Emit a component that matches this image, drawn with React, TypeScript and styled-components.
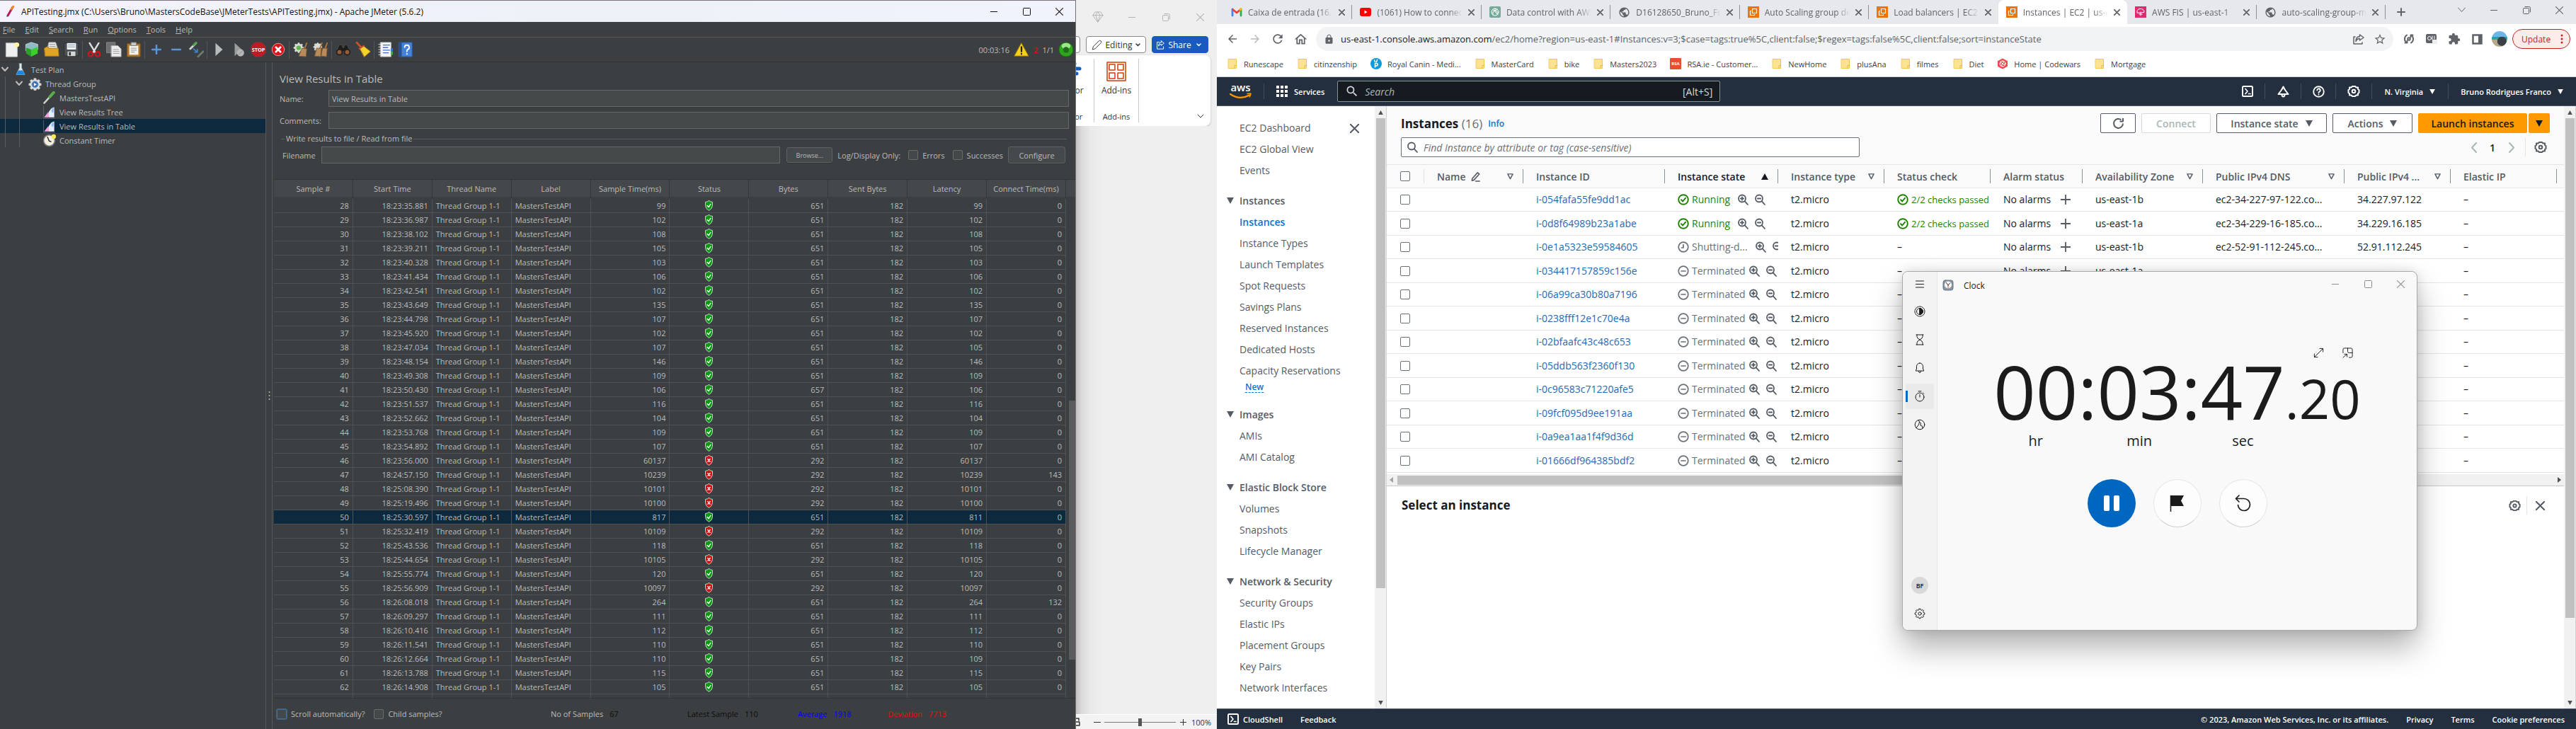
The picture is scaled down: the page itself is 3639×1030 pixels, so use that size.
import React from "react";
import styled, { createGlobalStyle, css } from "styled-components";
import {
  MdArrowBack, MdArrowForward, MdRefresh, MdOutlineHome, MdLock, MdStarBorder,
  MdExtension, MdSearch, MdPublic,
} from "react-icons/md";

const ui = `"Open Sans", "Noto Sans", "Liberation Sans", sans-serif`;

const Global = createGlobalStyle`
  *, *::before, *::after { box-sizing: border-box; }
  html, body { margin: 0; height: 100%; }
  body { font-family: ${ui}; overflow: hidden; background: #efefef; }
  #root { height: 100%; }
  button, input { font: inherit; color: inherit; margin: 0; }
  button { cursor: pointer; }
  a { color: inherit; text-decoration: none; }
`;

const Desktop = styled.div`
  display: grid;
  grid-template-columns: minmax(0, 1520fr) minmax(0, 199fr) minmax(0, 1920fr);
  height: 100vh;
  min-height: 600px;
  white-space: nowrap;
`;

const Svg = styled.svg<{ $w: number; $h?: number }>`
  display: block;
  flex: none;
  width: ${(p) => p.$w}px;
  height: ${(p) => p.$h ?? p.$w}px;
  fill: none;
  stroke: currentColor;
  stroke-linecap: round;
  stroke-linejoin: round;
`;
type GlyphProps = { w?: number; h?: number; box?: string; line?: number; children: React.ReactNode };
const Glyph = ({ w = 16, h, box = "0 0 16 16", line = 1, children }: GlyphProps) => (
  <Svg $w={w} $h={h} viewBox={box} strokeWidth={line} aria-hidden="true">{children}</Svg>
);

const Bare = styled.button<{ $w?: number; $h?: number }>`
  display: flex;
  align-items: center;
  justify-content: center;
  flex: none;
  padding: 0;
  border: 0;
  background: none;
  width: ${(p) => (p.$w ? `${p.$w}px` : "auto")};
  height: ${(p) => (p.$h ? `${p.$h}px` : "auto")};
`;
const Spacer = styled.div`flex: 1;`;

const MinGlyph = () => <Glyph w={10} box="0 0 10 10"><path d="M0 5.500h10" /></Glyph>;
const MaxGlyph = () => <Glyph w={11} box="0 0 11 11"><rect x=".5" y=".5" width="10" height="10" rx="1" /></Glyph>;
const RestoreGlyph = () => <Glyph w={11} box="0 0 11 11"><rect x=".5" y="2.500" width="8" height="8" rx="1" /><path d="M3 .5h5.500a2 2 0 0 1 2 2V8" /></Glyph>;
const CloseGlyph = ({ w = 11, line = 1 }: { w?: number; line?: number }) => <Glyph w={w} box="0 0 10 10" line={line}><path d="M.5.5l9 9M9.500.5l-9 9" /></Glyph>;

/* ---------- JMeter ---------- */

const JMeterWindow = styled.section`
  display: flex;
  flex-direction: column;
  min-height: 0;
  overflow: hidden;
  background: #3c3f41;
  color: #bbbbbb;
  font-size: 11px;
  border-right: 1px solid #77706f;
`;
const JTitleBar = styled.header`
  display: flex;
  align-items: center;
  height: 31px;
  padding-left: 9px;
  gap: 9px;
  border-top: 1px solid #7b7478;
  background: linear-gradient(90deg, #f4f2fb, #ecf1f8 55%, #f0f3fb);
  color: #111;
  font-size: 12px;
`;
const JWindowButtons = styled.div`display: flex;`;
const JMenuBar = styled.nav`
  display: flex;
  align-items: center;
  height: 22px;
  padding-left: 4px;
  gap: 14px;
  border-bottom: 1px solid #5a5856;
`;
const JToolBar = styled.div`
  display: flex;
  align-items: center;
  height: 35px;
  padding-left: 3px;
  border-bottom: 1px solid #323232;
`;
const ToolSep = styled.i`
  width: 1px;
  height: 25px;
  margin: 0 2px 0 1px;
  background: #535658;
`;
const RunInfo = styled.div`
  display: flex;
  align-items: center;
  gap: 6px;
  padding-right: 2px;
`;
const Alert = styled.span`color: #ff0000;`;
const JBody = styled.div`
  flex: 1;
  min-height: 0;
  display: grid;
  grid-template-columns: 375px 10px minmax(0, 1fr);
`;
const Tree = styled.ul`
  list-style: none;
  margin: 0;
  padding: 0;
`;
const TreeRow = styled.li<{ $depth: number; $on?: boolean }>`
  display: flex;
  align-items: center;
  height: 20px;
  gap: 5px;
  padding-left: ${(p) => p.$depth * 20}px;
  background:
    ${(p) => (p.$depth > 0 ? "linear-gradient(#5a5d5f, #5a5d5f) 7px 0 / 1px 100% no-repeat," : "")}
    ${(p) => (p.$depth > 1 ? "linear-gradient(#5a5d5f, #5a5d5f) 27px 0 / 1px 100% no-repeat," : "")}
    ${(p) => (p.$on ? "#0d293e" : "transparent")};
`;
const Twist = styled.span`
  display: flex;
  justify-content: center;
  width: 14px;
`;
const TreeIcon = styled.span`
  display: flex;
  justify-content: center;
  width: 20px;
`;
const Splitter = styled.div`
  display: flex;
  align-items: center;
  justify-content: center;
  border-left: 1px solid #555859;
  border-right: 1px solid #555859;
`;
const JPane = styled.main`
  display: flex;
  flex-direction: column;
  min-width: 0;
  min-height: 0;
`;
const JForm = styled.form`
  display: grid;
  row-gap: 7px;
  padding: 13px 9px 0 10px;
`;
const JHeading = styled.h1`
  margin: 0 0 -1px;
  font-size: 15px;
  font-weight: 400;
  line-height: 20px;
`;
const Field = styled.div<{ $label: number }>`
  display: grid;
  grid-template-columns: ${(p) => p.$label}px minmax(0, 1fr);
  align-items: center;
`;
const JInput = styled.input`
  min-width: 0;
  width: 100%;
  height: 24px;
  padding: 0 4px;
  border: 1px solid #646668;
  background: #45494a;
  outline: 0;
`;
const FileSet = styled.fieldset`
  min-width: 0;
  margin: -3px 3px 0 2px;
  padding: 1px 2px 0;
  border: 0;
  border-top: 1px solid #5b5d5e;
`;
const Legend = styled.legend`
  margin-left: 3px;
  padding: 0 2px;
  line-height: 20px;
`;
const FileRow = styled.div`
  display: flex;
  align-items: center;
  ${Field} { flex: 1; margin-right: 9px; }
`;
const JButton = styled.button<{ $w: number; $small?: boolean }>`
  width: ${(p) => p.$w}px;
  height: ${(p) => (p.$small ? 22 : 24)}px;
  padding: 0;
  font-size: ${(p) => (p.$small ? 9 : 11)}px;
  border: 1px solid #5e6162;
  border-radius: 3px;
  background: #44494b;
  box-shadow: 0 1px 0 #333637;
`;
const JCheck = styled.label`
  display: flex;
  align-items: center;
  gap: 6px;
  margin-left: 11px;
  input {
    appearance: none;
    width: 14px;
    height: 14px;
    border: 1px solid #6b6b6b;
    border-radius: 2px;
    background: #43494a;
  }
  input[data-focus="true"] {
    border: 1px solid #466d94;
    box-shadow: 0 0 0 1px #3d6185;
  }
`;
const LogLabel = styled.span`margin-left: 7px;`;
const ResultArea = styled.div`
  flex: 1;
  min-height: 0;
  display: grid;
  grid-template-columns: minmax(0, 1fr) 13px;
  margin: 22px 0 0 2px;
  overflow: hidden;
  border-top: 1px solid #313335;
  border-bottom: 1px solid #313335;
`;
const Clip = styled.div`
  min-height: 0;
  overflow: hidden;
`;
const ResultTable = styled.table`
  width: 100%;
  table-layout: fixed;
  border-collapse: separate;
  border-spacing: 0;
  th {
    height: 27px;
    padding: 0;
    font-weight: 400;
    text-align: center;
    background: #45484a;
    background-clip: padding-box;
    border-right: 1px solid #35383a;
    border-bottom: 3px solid #3c3f41;
  }
  td {
    height: 20px;
    padding: 0 5px;
    line-height: 16px;
    text-align: right;
    border-right: 1px solid #505355;
    border-bottom: 1px solid #505355;
  }
`;
const ResultRow = styled.tr<{ $on?: boolean }>`background: ${(p) => (p.$on ? "#0d293e" : "transparent")};`;
const LeftCell = styled.td`&&& { text-align: left; }`;
const IconCell = styled.td`svg { margin: 0 auto; }`;
const JScroll = styled.div`
  display: flex;
  flex-direction: column;
  align-items: center;
  &::before { content: ""; width: 100%; height: 24px; background: #45484a; }
`;
const JThumb = styled.div`
  width: 9px;
  flex: 0 0 50%;
  margin: 288px 0 0 3px;
  background: #595b5d;
`;
const JFooter = styled.footer`
  display: flex;
  align-items: center;
  height: 43px;
  padding-left: 6px;
  ${JCheck} { margin-left: 0; margin-right: 13px; }
`;
const CheckGroup = styled.div`
  display: flex;
  flex: 0 0 387px;
`;
const Stats = styled.dl`
  display: grid;
  grid-template-columns: 193px 156px 127px auto;
  margin: 0;
`;
const Stat = styled.div<{ $tone: string; $value?: string }>`
  display: flex;
  gap: 9px;
  color: ${(p) => p.$tone};
  dd { margin: 0; color: ${(p) => p.$value ?? p.$tone}; }
`;

const Shield = ({ ok }: { ok: boolean }) => (
  <Glyph w={13} h={15} box="0 0 13 16">
    <path d="M6.500.6Q9 2.600 11.800 2.600V8q0 4.500-5.300 7.400Q1.200 12.500 1.200 8V2.600Q4 2.600 6.500.6z" fill={ok ? "#0a9a16" : "#d40d14"} stroke="#d4d8d4" />
    {ok
      ? <path d="M4 8l2 2.200 3.200-4.400" stroke="#fff" strokeWidth="1.400" />
      : <path d="M4.800 6l3.400 4M8.200 6l-3.400 4" stroke="#fff" strokeWidth="1.500" />}
  </Glyph>
);

const gear = "M10.300 2h3.400l.6 2.600 2 .8 2.300-1.400 2.400 2.400-1.400 2.300.8 2 2.600.6v3.400l-2.600.6-.8 2 1.400 2.300-2.400 2.400-2.300-1.400-2 .8-.6 2.600h-3.400l-.6-2.600-2-.8-2.300 1.400L3 19.600l1.400-2.300-.8-2-2.600-.6v-3.400l2.600-.6.8-2L3 6.400 5.400 4l2.300 1.400 2-.8z";

const Art = ({ w = 22, children }: { w?: number; children: React.ReactNode }) => <Glyph w={w} box="0 0 24 24">{children}</Glyph>;
const tools: Record<string, React.ReactNode> = {
  New: <Art><path d="M3 2h17v21H3z" fill="#efefef" stroke="#cfcfcf" /><circle cx="19.500" cy="4.500" r="3.500" fill="#fff7a0" stroke="none" /></Art>,
  Templates: <Art><path d="M3 4l8-3 10 3v8l-8 5-10-3z" fill="#8fb9c4" stroke="#c9dbe0" /><path d="M3 9l8 3v11l-8-5z" fill="#2aa12a" stroke="none" /><path d="M11 12l10-4v10l-10 5z" fill="#3ccf2c" stroke="none" /></Art>,
  Open: <Art><path d="M8 1h10l3 9H6z" fill="#eee" stroke="#bbb" /><path d="M9 4h8M9 7h9" stroke="#888" /><path d="M1 10l3-2h3v2h15l1 12H2z" fill="#e0a527" stroke="#b98212" /></Art>,
  Save: <Art><path d="M1 2h22v20H1z" fill="#4d5154" stroke="#2b2d2e" /><path d="M5 2h14v10H5z" fill="#eef2f5" stroke="none" /><path d="M7 5h10M7 8h10" stroke="#7f9bb5" /><path d="M6 15h12v7H6z" fill="#d5d8da" stroke="none" /><path d="M8 16h3v5H8z" fill="#333" stroke="none" /></Art>,
  Cut: <Art><path d="M5 2l9 15M19 2l-9 15" stroke="#e2e2e2" strokeWidth="2.500" /><circle cx="6.500" cy="19" r="3.500" stroke="#d3151b" strokeWidth="2.500" /><circle cx="17.500" cy="19" r="3.500" stroke="#d3151b" strokeWidth="2.500" /></Art>,
  Copy: <Art><path d="M1 1h13v16H1z" fill="#6e7070" stroke="#8b8d8d" /><path d="M8 6h10l5 5v12H8z" fill="#ececec" stroke="#aaa" /><path d="M11 12h8M11 15h9M11 18h9" stroke="#999" /></Art>,
  Paste: <Art><path d="M2 3h20v20H2z" fill="#b2782b" stroke="#7d5118" /><path d="M5 6h14v14H5z" fill="#f3f3ee" stroke="none" /><path d="M8 1h8v5H8z" fill="#c9c9c9" stroke="#777" /><path d="M8 10h8M8 13h8M8 16h5" stroke="#8a8a8a" /></Art>,
  Expand: <Glyph w={14} box="0 0 14 14" line={2.500}><path d="M7 1v12M1 7h12" stroke="#5c94d6" /></Glyph>,
  Collapse: <Glyph w={14} box="0 0 14 14" line={2.500}><path d="M1 7h12" stroke="#5c94d6" /></Glyph>,
  Toggle: <Art><path d="M3 11L12 2" stroke="#cdd6cd" strokeWidth="3" /><path d="M8 5l4-4" stroke="#4a9f42" strokeWidth="3" /><path d="M8 11l6 5M14 12v4h-4" stroke="#3d83cf" strokeWidth="2" /><path d="M15 23l8-8" stroke="#6c7a6c" strokeWidth="3" /></Art>,
  Start: <Art><path d="M7 2l11 10L7 22z" fill="#b9bcbd" stroke="none" /></Art>,
  "Start no pauses": <Art><path d="M6 2l11 10L6 22z" fill="#9b9e9f" stroke="none" /><circle cx="15" cy="17" r="5.500" fill="#b6b8b8" stroke="none" /><path d="M12 20l6-6" stroke="#888" /></Art>,
  Stop: <Art><path d="M7 1h10l6 6v10l-6 6H7l-6-6V7z" fill="#c01b25" stroke="#7c3b3f" /><text x="12" y="15.500" textAnchor="middle" fontSize="8" fontWeight="700" fill="#fff" stroke="none">STOP</text></Art>,
  Shutdown: <Art><circle cx="12" cy="12" r="9.500" fill="#d9121a" stroke="#f0a0a0" /><path d="M8.500 8.500l7 7M15.500 8.500l-7 7" stroke="#fff" strokeWidth="3" /></Art>,
  Clear: <Art><path d={gear} fill="#d9d9d6" stroke="none" transform="scale(.72)" /><circle cx="8.600" cy="9.400" r="3.500" fill="#5cb548" stroke="none" /><path d="M21 2l-3 8" stroke="#a9793f" strokeWidth="2" /><path d="M14 10l7 1-1 12-11-1z" fill="#b98a5a" stroke="#7e5b35" /></Art>,
  "Clear all": <Art><path d={gear} fill="#d9d9d6" stroke="none" transform="scale(.62)" /><path d="M14 2l-3 8M22 2l-3 8" stroke="#a9793f" strokeWidth="2" /><path d="M6 10h7l-1 13-9-1z" fill="#b98a5a" stroke="#7e5b35" /><path d="M15 10h7l-1 13-8-1z" fill="#b98a5a" stroke="#7e5b35" /></Art>,
  Find: <Art><path d="M6 5h4l1 4h2l1-4h4l4 10H2z" fill="#1c1c1c" stroke="#4a4a4a" /><circle cx="6" cy="16" r="4.200" fill="#9a5a35" stroke="#222" strokeWidth="2" /><circle cx="18" cy="16" r="4.200" fill="#9a5a35" stroke="#222" strokeWidth="2" /></Art>,
  "Reset search": <Art><path d="M2 1l8 9" stroke="#c4552a" strokeWidth="3" /><path d="M7 10l6-3 10 8-9 8z" fill="#f5d12e" stroke="#c99c10" /><path d="M6 11l7-5" stroke="#d24830" strokeWidth="2" /></Art>,
  Functions: <Art><path d="M4 1h16v22H4z" fill="#f6f7fb" stroke="#bbb" /><path d="M8 5h10M8 9h7M8 13h10M8 17h8" stroke="#3f6fd0" strokeWidth="1.500" /><path d="M1 4h4M1 8h4M1 12h4M1 16h4M1 20h4" stroke="#ddd" /><path d="M20 10h3v5h-3z" fill="#2c6fe0" stroke="none" /><path d="M20 15h3v5h-3z" fill="#35b53c" stroke="none" /></Art>,
  Help: <Art><path d="M2 1h20v22H2z" fill="#4583d8" stroke="#2b5ca6" /><path d="M2 1h4v22H2z" fill="#284f8f" stroke="none" /><path d="M10.500 8.500a3.500 3.500 0 1 1 4.500 3.500q-1 .5-1 3M14 18.500v.5" stroke="#fff" strokeWidth="2" /></Art>,
};
const toolGroups = [
  ["New", "Templates", "Open", "Save"], ["Cut", "Copy", "Paste"], ["Expand", "Collapse", "Toggle"],
  ["Start", "Start no pauses", "Stop", "Shutdown"], ["Clear", "Clear all"], ["Find", "Reset search"], ["Functions", "Help"],
];
const Down = () => <Glyph w={10} h={8} box="0 0 10 8" line={2}><path d="M1 1.500l4 4.500 4-4.500" /></Glyph>;
const Chart = () => <Art w={19}><path d="M2 1v22h20" stroke="#6c6a78" /><path d="M3 21l7-9 3 4v5z" fill="#f3a6dd" stroke="none" /><path d="M11 12Q16 3 21 3v18h-9z" fill="#e4eeff" stroke="none" /><path d="M16 9q3-7 4-4 0 9-3 8z" fill="#8fb8ee" stroke="none" /></Art>;
const treeRows = [
  { depth: 0, text: "Test Plan", open: true, icon: <Art w={18}><path d="M10 1h4v8l6 13H4l6-13z" fill="#d8e6ee" stroke="#9fb4c0" /><path d="M8 14h8l4 8H4z" fill="#1f86dd" stroke="none" /></Art> },
  { depth: 1, text: "Thread Group", open: true, icon: <Art w={19}><path d={gear} fill="#dfe2e4" stroke="#aaa" /><circle cx="12" cy="13" r="6" fill="#3b6fae" stroke="#9db7d5" /><path d="M10 10l5 3-5 3z" fill="#fff" stroke="none" /></Art> },
  { depth: 2, text: "MastersTestAPI", icon: <Art w={19}><path d="M3 21L14 9" stroke="#cdd3cd" strokeWidth="3" /><path d="M13 10l7-8" stroke="#5bab4d" strokeWidth="5" /></Art> },
  { depth: 2, text: "View Results Tree", icon: <Chart /> },
  { depth: 2, text: "View Results in Table", on: true, icon: <Chart /> },
  { depth: 2, text: "Constant Timer", icon: <Art w={19}><circle cx="12" cy="12" r="10" fill="#f2efdf" stroke="#76777a" strokeWidth="2" /><path d="M12 13l-3-7M12 13l3 1" stroke="#333" strokeWidth="2" /><circle cx="20" cy="5" r="4" fill="#ffe94d" stroke="none" /></Art> },
];

const headers = ["Sample #", "Start Time", "Thread Name", "Label", "Sample Time(ms)", "Status", "Bytes", "Sent Bytes", "Latency", "Connect Time(ms)"];
type Sample = [number, string, number, number?, number?, number?];
const samples: Sample[] = [
  [28, "18:23:35.881", 99], [29, "18:23:36.987", 102], [30, "18:23:38.102", 108], [31, "18:23:39.211", 105],
  [32, "18:23:40.328", 103], [33, "18:23:41.434", 106], [34, "18:23:42.541", 102], [35, "18:23:43.649", 135],
  [36, "18:23:44.798", 107], [37, "18:23:45.920", 102], [38, "18:23:47.034", 107, 651, 105], [39, "18:23:48.154", 146],
  [40, "18:23:49.308", 109], [41, "18:23:50.430", 106, 657], [42, "18:23:51.537", 116], [43, "18:23:52.662", 104],
  [44, "18:23:53.768", 109], [45, "18:23:54.892", 107], [46, "18:23:56.000", 60137, 292], [47, "18:24:57.150", 10239, 292, 10239, 143],
  [48, "18:25:08.390", 10101, 292], [49, "18:25:19.496", 10100, 292], [50, "18:25:30.597", 817, 651, 811], [51, "18:25:32.419", 10109, 292],
  [52, "18:25:43.536", 118], [53, "18:25:44.654", 10105, 292], [54, "18:25:55.774", 120], [55, "18:25:56.909", 10097, 292],
  [56, "18:26:08.018", 264, 651, 264, 132], [57, "18:26:09.297", 111], [58, "18:26:10.416", 112], [59, "18:26:11.541", 110],
  [60, "18:26:12.664", 110, 651, 109], [61, "18:26:13.788", 115], [62, "18:26:14.908", 105],
];

const JMeter = () => (
  <JMeterWindow>
    <JTitleBar>
      <Glyph w={12} h={16} box="0 0 12 16"><path d="M2 14L9 2" stroke="#c2185b" strokeWidth="3" /><path d="M7 5l3-4" stroke="#f08a24" strokeWidth="2.500" /><path d="M1 15.500l2-3" stroke="#5a2d82" /></Glyph>
      <span>APITesting.jmx (C:\Users\Bruno\MastersCodeBase\JMeterTests\APITesting.jmx) - Apache JMeter (5.6.2)</span>
      <Spacer />
      <JWindowButtons>
        <Bare $w={46} $h={30} aria-label="Minimize"><MinGlyph /></Bare>
        <Bare $w={46} $h={30} aria-label="Maximize"><MaxGlyph /></Bare>
        <Bare $w={46} $h={30} aria-label="Close"><CloseGlyph /></Bare>
      </JWindowButtons>
    </JTitleBar>
    <JMenuBar>
      {["File", "Edit", "Search", "Run", "Options", "Tools", "Help"].map((m) => <Bare key={m}><span><u>{m[0]}</u>{m.slice(1)}</span></Bare>)}
    </JMenuBar>
    <JToolBar>
      {toolGroups.map((g, i) => (
        <React.Fragment key={g[0]}>
          {i > 0 && <ToolSep />}
          {g.map((t) => <Bare key={t} $w={28} $h={28} aria-label={t}>{tools[t]}</Bare>)}
        </React.Fragment>
      ))}
      <Spacer />
      <RunInfo>
        <span>00:03:16</span>
        <Art><path d="M12 2l11 20H1z" fill="#f7cf1b" stroke="#8b7205" /><path d="M12 8v7M12 18.500v.5" stroke="#222" strokeWidth="2.500" /></Art>
        <Alert>2</Alert>
        <span>1/1</span>
        <Art><circle cx="12" cy="12" r="11" fill="#2fa51d" stroke="#1d7010" /><ellipse cx="12" cy="6.500" rx="7" ry="4.500" fill="#9be58a" stroke="none" /><circle cx="12" cy="12.500" r="4.500" fill="#1e6d1a" stroke="none" /></Art>
      </RunInfo>
    </JToolBar>
    <JBody>
      <Tree>
        {treeRows.map((r) => (
          <TreeRow key={r.text} $depth={r.depth} $on={r.on}>
            <Twist>{r.open && <Down />}</Twist>
            <TreeIcon>{r.icon}</TreeIcon>
            <span>{r.text}</span>
          </TreeRow>
        ))}
      </Tree>
      <Splitter><Glyph w={3} h={14} box="0 0 3 14" line={2}><path d="M1.500 2v.1M1.500 7v.1M1.500 12v.1" /></Glyph></Splitter>
      <JPane>
        <JForm>
          <JHeading>View Results in Table</JHeading>
          <Field $label={69}><label htmlFor="j-name">Name:</label><JInput id="j-name" defaultValue="View Results in Table" /></Field>
          <Field $label={69}><label htmlFor="j-comments">Comments:</label><JInput id="j-comments" /></Field>
          <FileSet>
            <Legend>Write results to file / Read from file</Legend>
            <FileRow>
              <Field $label={55}><label htmlFor="j-file">Filename</label><JInput id="j-file" /></Field>
              <JButton type="button" $w={65} $small>Browse...</JButton>
              <LogLabel>Log/Display Only:</LogLabel>
              <JCheck><input type="checkbox" />Errors</JCheck>
              <JCheck><input type="checkbox" />Successes</JCheck>
              <LogLabel><JButton type="button" $w={81}>Configure</JButton></LogLabel>
            </FileRow>
          </FileSet>
        </JForm>
        <ResultArea>
          <Clip>
            <ResultTable>
              <thead><tr>{headers.map((h) => <th key={h}>{h}</th>)}</tr></thead>
              <tbody>
                {samples.map(([n, start, time, bytes = 651, latency = time, connect = 0]) => (
                  <ResultRow key={n} $on={n === 50}>
                    <td>{n}</td><td>{start}</td><LeftCell>Thread Group 1-1</LeftCell><LeftCell>MastersTestAPI</LeftCell>
                    <td>{time}</td><IconCell><Shield ok={bytes !== 292} /></IconCell>
                    <td>{bytes}</td><td>182</td><td>{latency}</td><td>{connect}</td>
                  </ResultRow>
                ))}
                <tr>{headers.map((h) => <td key={h} />)}</tr>
              </tbody>
            </ResultTable>
          </Clip>
          <JScroll><JThumb /></JScroll>
        </ResultArea>
        <JFooter>
          <CheckGroup>
            <JCheck><input type="checkbox" data-focus="true" />Scroll automatically?</JCheck>
            <JCheck><input type="checkbox" />Child samples?</JCheck>
          </CheckGroup>
          <Stats>
            <Stat $tone="#bbbbbb" $value="#0c0c0c"><dt>No of Samples</dt><dd>67</dd></Stat>
            <Stat $tone="#0c0c0c"><dt>Latest Sample</dt><dd>110</dd></Stat>
            <Stat $tone="#0000ff"><dt>Average</dt><dd>1918</dd></Stat>
            <Stat $tone="#ff0000"><dt>Deviation</dt><dd>7713</dd></Stat>
          </Stats>
        </JFooter>
      </JPane>
    </JBody>
  </JMeterWindow>
);

/* ---------- Word ---------- */

const WordWindow = styled.section`
  display: flex;
  flex-direction: column;
  overflow: hidden;
  background: #efefef;
  color: #333;
  font-size: 12px;
`;
const WordTitle = styled.header`
  display: flex;
  justify-content: flex-end;
  height: 48px;
  color: #b4b4b4;
`;
const WordActions = styled.div`
  display: flex;
  justify-content: flex-end;
  gap: 8px;
  padding: 3px 12px 3px 0;
`;
const WordBtn = styled.button<{ $blue?: boolean; $w: number }>`
  display: flex;
  flex: none;
  align-items: center;
  justify-content: center;
  gap: 4px;
  width: ${(p) => p.$w}px;
  height: 24px;
  padding: 0;
  border-radius: 4px;
  border: 1px solid ${(p) => (p.$blue ? "#185abd" : "#8a8a8a")};
  background: ${(p) => (p.$blue ? "#185abd" : "#fff")};
  color: ${(p) => (p.$blue ? "#fff" : "#333")};
`;
const Ribbon = styled.div`
  display: flex;
  justify-content: flex-end;
  height: 100px;
  margin-right: 9px;
  padding: 5px 0;
  background: #fff;
  border-radius: 0 8px 8px 0;
  box-shadow: 0 1px 3px #bbb;
`;
const RibbonGroup = styled.div`
  display: flex;
  flex-direction: column;
  align-items: center;
  justify-content: space-between;
  flex: none;
  width: 63px;
  padding: 4px 0 0;
  border-right: 1px solid #c8c8c8;
  line-height: 16px;
  small { font-size: 11px; }
`;
const RibbonItem = styled.button`
  display: grid;
  justify-items: center;
  gap: 5px;
  padding: 0;
  border: 0;
  background: none;
  line-height: 16px;
`;
const RibbonEnd = styled.div`
  display: flex;
  flex: 0 0 101px;
  align-items: flex-end;
  justify-content: flex-end;
  padding: 0 9px 5px 0;
`;
const WordCanvas = styled.div`
  flex: 1;
  background: linear-gradient(90deg, #c2bfbf, #dcdada 8px, #e9e9e9 20px, #efefef 40px);
`;
const WordStatus = styled.footer`
  display: flex;
  align-items: center;
  height: 21px;
  gap: 4px;
  padding-right: 6px;
  background: #f3f3f3;
  border-top: 1px solid #fff;
  font-size: 11px;
`;
const ZoomRange = styled.input`
  appearance: none;
  width: 101px;
  height: 12px;
  background: linear-gradient(#777, #777) center / 100% 1px no-repeat;
  &::-webkit-slider-thumb { appearance: none; width: 5px; height: 11px; background: #555; }
`;
const SmallDown = () => <Glyph w={7} h={5} box="0 0 7 5" line={1.500}><path d="M1 1l2.500 2.500L6 1" /></Glyph>;

const Word = () => (
  <WordWindow>
    <WordTitle>
      <Bare $w={48} $h={48} aria-label="Premium"><Glyph w={16}><path d="M1 5.500L4 1h8l3 4.500L8 15zM1 5.500h14M5 5.500L8 15l3-9.500L8 1z" /></Glyph></Bare>
      <Bare $w={48} $h={48} aria-label="Minimize"><MinGlyph /></Bare>
      <Bare $w={48} $h={48} aria-label="Restore"><RestoreGlyph /></Bare>
      <Bare $w={48} $h={48} aria-label="Close"><CloseGlyph /></Bare>
    </WordTitle>
    <WordActions>
      <WordBtn $w={40} aria-label="Comments" />
      <WordBtn $w={85}>
        <Glyph w={15}><path d="M1.500 14.500l1-4L11 2q1.500-1.500 3 0t0 3l-8.500 8.500z" /></Glyph>Editing<SmallDown />
      </WordBtn>
      <WordBtn $w={80} $blue>
        <Glyph w={13} line={1.200}><path d="M6 3H2v12h11v-4M9 1l5 4-5 4V6.500Q6 6.500 4.500 10 4.500 4 9 3.500z" /></Glyph>Share
        <Bare as="span" $w={14}><SmallDown /></Bare>
      </WordBtn>
    </WordActions>
    <Ribbon>
      <RibbonGroup>
        <RibbonItem>
          <Glyph w={28} box="0 0 28 28" line={5}><path d="M3 10h22M3 17h18M3 24h14M14 3h4" stroke="#185abd" /></Glyph>Editor
        </RibbonItem>
        <small>Editor</small>
      </RibbonGroup>
      <RibbonGroup>
        <RibbonItem>
          <Glyph w={28} box="0 0 28 28" line={1.500}><path d="M1 1h26v26H1zM4 4h8v8H4zM16 4h8v8h-8zM4 16h8v8H4zM16 16h8v8h-8z" stroke="#d83b01" /></Glyph>Add-ins
        </RibbonItem>
        <small>Add-ins</small>
      </RibbonGroup>
      <RibbonEnd><Bare aria-label="Collapse ribbon"><Glyph w={10} h={7} box="0 0 10 7"><path d="M1 1l4 4 4-4" /></Glyph></Bare></RibbonEnd>
    </Ribbon>
    <WordCanvas />
    <WordStatus>
      <Glyph w={6} h={12} box="0 0 6 12" line={1.500}><path d="M0 1h4v3M0 6h5M0 11h5V7" /></Glyph>
      <Spacer />
      <Bare $w={12} aria-label="Zoom out"><MinGlyph /></Bare>
      <ZoomRange type="range" aria-label="Zoom" defaultValue={50} />
      <Bare $w={12} aria-label="Zoom in"><Glyph w={9} box="0 0 9 9"><path d="M4.500 0v9M0 4.500h9" /></Glyph></Bare>
      <Bare $w={32}>100%</Bare>
    </WordStatus>
  </WordWindow>
);

/* ---------- Browser ---------- */

const Browser = styled.section`
  position: relative;
  display: flex;
  flex-direction: column;
  min-height: 0;
  background: #fff;
  color: #5f6368;
`;
const TabStrip = styled.header`
  display: flex;
  height: 34px;
  padding-left: 9px;
  background: #e7e8ec;
`;
const Tabs = styled.div`
  display: flex;
  flex: 0 1 1642px;
  min-width: 0;
`;
const Tab = styled.div<{ $on?: boolean; $bar?: boolean }>`
  display: flex;
  flex: 1;
  min-width: 0;
  align-items: center;
  gap: 8px;
  padding: 0 10px 0 11px;
  font-size: 12px;
  ${(p) => p.$bar && css`background: linear-gradient(#8d9096, #8d9096) right center / 1px 20px no-repeat;`}
  ${(p) => p.$on && css`background: #fff; border-radius: 8px 8px 0 0;`}
`;
const TabText = styled.span`
  flex: 1;
  min-width: 0;
  overflow: hidden;
  mask-image: linear-gradient(90deg, #000 84%, transparent);
`;
const WindowButtons = styled.div`
  display: flex;
  height: 28px;
  padding-right: 1px;
`;
const AddressRow = styled.div`
  display: flex;
  align-items: center;
  height: 38px;
  padding: 4px 8px 0 6px;
`;
const Omnibox = styled.div`
  display: flex;
  flex: 1;
  align-items: center;
  min-width: 0;
  height: 34px;
  margin: 0 6px;
  padding: 0 10px 0 11px;
  gap: 9px;
  border-radius: 17px;
  background: #f1f3f4;
  font-size: 13px;
  b { font-weight: 400; color: #202124; }
`;
const Url = styled.span`flex: 1; min-width: 0; overflow: hidden;`;
const Update = styled.button`
  display: flex;
  align-items: center;
  justify-content: space-between;
  width: 82px;
  height: 28px;
  margin-left: 2px;
  padding: 0 9px 0 12px;
  border: 1px solid #c5221f;
  border-radius: 14px;
  background: #fbecea;
  color: #c5221f;
  font-size: 12px;
`;
const Avatar = styled.span`
  width: 22px;
  height: 22px;
  border-radius: 50%;
  background: radial-gradient(circle at 65% 65%, #3b3f46 30%, transparent 34%), linear-gradient(#6db6ea 38%, #20a0b0 38%, #2aa79f 55%, #b6a68a 56%);
`;
const Bookmarks = styled.nav`
  display: flex;
  align-items: center;
  gap: 19px;
  height: 37px;
  padding-left: 14px;
  border-bottom: 1px solid #d3d6d8;
  color: #3c4043;
  font-size: 11px;
`;
const Bookmark = styled.a`
  display: flex;
  align-items: center;
  gap: 8px;
`;
const AwsNav = styled.nav`
  display: flex;
  align-items: center;
  height: 41px;
  padding: 0 18px;
  background: #232f3e;
  border-bottom: 1px solid #4d5a69;
  color: #fff;
  font-size: 11px;
  font-weight: 600;
`;
const NavSep = styled.i<{ $l?: number; $r?: number }>`
  width: 1px;
  height: 22px;
  margin: 0 ${(p) => p.$r ?? 0}px 0 ${(p) => p.$l ?? 0}px;
  background: #414d5c;
`;
const NavBtn = styled(Bare)`gap: 9px;`;
const NavSearch = styled.label`
  display: flex;
  flex: 0 1 541px;
  align-items: center;
  gap: 8px;
  height: 30px;
  margin-left: 18px;
  padding: 0 10px;
  border: 1px solid #879596;
  border-radius: 2px;
  background: #161b22;
  color: #d5dbdb;
  font-size: 14px;
  font-weight: 400;
  input { flex: 1; min-width: 0; padding: 0; border: 0; outline: 0; background: none; }
  input::placeholder { color: #aab7b8; font-style: italic; }
`;
const Console = styled.div`
  flex: 1;
  min-height: 0;
  display: grid;
  grid-template-columns: 223px 17px minmax(0, 1fr) 17px;
  color: #545b64;
  font-size: 14px;
`;
const Side = styled.aside`
  min-height: 0;
  overflow: hidden;
  padding: 16px 0 0 32px;
`;
const SideTop = styled.div`
  display: flex;
  align-items: center;
  justify-content: space-between;
  padding-right: 22px;
`;
const SideLink = styled.a<{ $on?: boolean }>`
  display: block;
  line-height: 30px;
  ${(p) => p.$on && css`color: #0972d3; font-weight: 600;`}
`;
const SideHead = styled.h2`
  display: flex;
  align-items: center;
  gap: 8px;
  height: 32px;
  margin: 11px 0 0 -18px;
  color: #545b64;
  font-size: 14px;
  font-weight: 600;
`;
const NewTag = styled.button`
  display: block;
  margin: 0 0 14px 8px;
  padding: 0;
  border: 0;
  border-bottom: 1px dashed #0972d3;
  background: none;
  color: #0972d3;
  font-size: 12px;
  font-weight: 600;
  line-height: 15px;
`;
const VScroll = styled.div`
  display: flex;
  flex-direction: column;
  align-items: center;
  justify-content: space-between;
  background: #f1f1f1;
  color: #505050;
  border-right: 1px solid #d0d3d3;
`;
const VThumb = styled.div<{ $share: number }>`
  width: 13px;
  height: ${(p) => p.$share}%;
  margin-bottom: auto;
  background: #c1c1c1;
`;
const Main = styled.main`
  display: flex;
  flex-direction: column;
  min-width: 0;
  min-height: 0;
`;
const Bar = styled.div`
  display: grid;
  gap: 6px;
  padding: 10px 20px;
  height: 82px;
  background: #fafafa;
`;
const BarRow = styled.div`
  display: flex;
  align-items: center;
  gap: 8px;
  height: 28px;
`;
const H1 = styled.h1`
  margin: 0;
  color: #16191f;
  font-size: 17px;
  font-weight: 700;
  span { color: #687078; font-weight: 400; }
`;
const InfoLink = styled.a`
  color: #0972d3;
  font-size: 12px;
  font-weight: 600;
`;
const AwsBtn = styled.button<{ $w: number; $tone?: "off" | "main" }>`
  display: flex;
  align-items: center;
  justify-content: center;
  gap: 10px;
  flex: none;
  width: ${(p) => p.$w}px;
  height: 28px;
  padding: 0;
  border: 1px solid #545b64;
  border-radius: 2px;
  background: #fff;
  color: #545b64;
  font-weight: 600;
  ${(p) => p.$tone === "off" && css`border-color: #d5dbdb; color: #aab7b8;`}
  ${(p) => p.$tone === "main" && css`border-color: #ff9900; background: #ff9900; color: #16191f;`}
`;
const SplitBtn = styled.div`display: flex; gap: 2px;`;
const FindBox = styled.label`
  display: flex;
  flex: 0 1 648px;
  align-items: center;
  gap: 8px;
  height: 28px;
  padding: 0 7px;
  border: 1px solid #687078;
  border-radius: 2px;
  background: #fff;
  input { flex: 1; min-width: 0; padding: 0; border: 0; outline: 0; background: none; }
  input::placeholder { color: #687078; font-style: italic; }
`;
const Pager = styled.div`
  display: flex;
  align-items: center;
  color: #16191f;
  font-weight: 600;
`;
const PageNumber = styled(Bare)`font-weight: 600;`;
const Grid = styled.table`
  width: 100%;
  table-layout: fixed;
  border-collapse: separate;
  border-spacing: 0;
  color: #16191f;
  th, td {
    padding: 0 0 0 18px;
    text-align: left;
    overflow: hidden;
    border-bottom: 1px solid #e3e6e6;
  }
  th {
    height: 34px;
    border-top: 1px solid #e3e6e6;
    background: linear-gradient(#879196, #879196) right center / 1px 20px no-repeat #fafafa;
    color: #545b64;
    font-weight: 600;
  }
  th:first-child { background: linear-gradient(#e0e3e3, #e0e3e3) right center / 1px 20px no-repeat #fafafa; }
  th:last-child { background: #fafafa; }
  th:first-child, td:first-child { padding-left: 19px; }
  td { height: 33px; line-height: 20px; }
  tr:nth-child(even) td { height: 34px; }
`;
const HeadCell = styled.div<{ $on?: boolean }>`
  display: flex;
  align-items: center;
  gap: 6px;
  padding-right: 14px;
  color: ${(p) => (p.$on ? "#16191f" : "inherit")};
`;
const Box = styled.input`
  display: block;
  appearance: none;
  width: 14px;
  height: 14px;
  margin: 0;
  border: 1px solid #687078;
  border-radius: 2px;
  background: #fff;
`;
const IdLink = styled.a`color: #2468b4;`;
const Inline = styled.div<{ $tone?: string; $gap?: number; $small?: boolean }>`
  display: flex;
  align-items: center;
  gap: 4px;
  color: ${(p) => p.$tone ?? "inherit"};
  font-size: ${(p) => (p.$small ? 13 : 14)}px;
  span { margin-right: ${(p) => p.$gap ?? 0}px; }
  i { display: flex; gap: 8px; color: #545b64; }
`;
const HScroll = styled.div`
  display: flex;
  align-items: center;
  height: 17px;
  margin-top: 2px;
  padding: 0 4px;
  gap: 6px;
  background: #f1f1f1;
  border-bottom: 1px solid #c6c9c9;
  color: #505050;
`;
const HThumb = styled.div`
  flex: 0 0 78%;
  height: 13px;
  background: #c1c1c1;
`;
const Detail = styled.section`
  display: flex;
  align-items: flex-start;
  justify-content: space-between;
  flex: 1;
  padding: 13px 16px 0 21px;
`;
const H2 = styled.h2`
  margin: 0;
  color: #16191f;
  font-size: 17px;
  font-weight: 700;
  line-height: 28px;
`;
const DetailTools = styled.div`display: flex; align-items: center; height: 28px;`;
const PaleSep = styled.i<{ $r?: number }>`
  width: 1px;
  height: 26px;
  margin: 0 ${(p) => p.$r ?? 0}px 0 5px;
  background: #e3e6e6;
`;
const GearBtn = styled(Bare)`color: #545b64;`;
const AwsFooter = styled.footer`
  display: flex;
  align-items: center;
  height: 29px;
  padding: 0 16px 0 15px;
  gap: 25px;
  background: #232f3e;
  border-top: 1px solid #4d5a69;
  color: #fff;
  font-size: 11px;
  font-weight: 600;
`;
const Shell = styled.a`display: flex; align-items: center; gap: 6px;`;

const TriDown = ({ w = 10 }: { w?: number }) => <Glyph w={w} h={w - 1} box="0 0 10 9"><path d="M0 0h10L5 9z" fill="currentColor" stroke="none" /></Glyph>;
const TriUp = ({ w = 10 }: { w?: number }) => <Glyph w={w} h={w - 1} box="0 0 10 9"><path d="M5 0l5 9H0z" fill="currentColor" stroke="none" /></Glyph>;
const Filter = () => <Glyph w={9} h={9} box="0 0 10 10" line={1.600}><path d="M1 1h8L5 8.500z" /></Glyph>;
const Gear = ({ w = 18 }: { w?: number }) => <Glyph w={w} box="0 0 18 18" line={2}><path d="M7 2h4l1.500 1.500H15V6l1.500 1v4L15 12v2.500h-2.500L11 16H7l-1.500-1.500H3V12l-1.500-1V7L3 6V3.500h2.500z" /><circle cx="9" cy="9" r="2.300" /></Glyph>;
const ShellGlyph = ({ w = 16 }: { w?: number }) => <Glyph w={w} line={2}><rect x="1" y="1" width="14" height="14" rx="1.500" /><path d="M5 4.500L8 8l-3 3.500M9.500 11.500H12" strokeWidth="1.700" /></Glyph>;
const Mag = ({ sign }: { sign?: string }) => <Glyph w={16} line={1.800}><circle cx="7" cy="6.500" r="5" /><path d="M10.800 10.300L15 15" />{sign && <path d={sign} />}</Glyph>;
const ZoomPair = () => <i><Mag sign="M4.800 6.500h4.400M7 4.300v4.400" /><Mag sign="M4.800 6.500h4.400" /></i>;
const OkGlyph = () => <Glyph w={16} line={1.900}><circle cx="8" cy="8" r="6.800" /><path d="M5 8.200l2.200 2.300L11 5.800" /></Glyph>;
const WaitGlyph = () => <Glyph w={16} line={1.700}><circle cx="8" cy="8" r="6.800" /><path d="M8 4.500V9H5.500" /></Glyph>;
const EndGlyph = () => <Glyph w={16} line={1.700}><circle cx="8" cy="8" r="6.800" /><path d="M5 8h6" /></Glyph>;
const Folder = () => <Glyph w={16}><path d="M2.500 1.500h11v13h-11z" fill="#fde293" stroke="#f0c64f" /><path d="M11 14.500v-4h3" stroke="#e7b93c" /></Glyph>;

const Ec2Icon = () => <Glyph w={16}><path d="M0 0h16v16H0z" fill="#e8760c" stroke="none" /><path d="M6.500 3.500h6v6h-6zM9.500 11.500v1h-6v-6h1" stroke="#fff" strokeWidth="1.200" /></Glyph>;
const tabs = [
  { t: "Caixa de entrada (16.1", i: <Glyph w={16} line={2.800}><path d="M2 13V4" stroke="#4285f4" /><path d="M14 13V4" stroke="#34a853" /><path d="M2 4l6 5 6-5" stroke="#ea4335" strokeLinecap="butt" /><path d="M13 5l1-1.500" stroke="#fbbc04" /></Glyph> },
  { t: "(1061) How to connect", i: <Glyph w={16}><rect x="0" y="2" width="16" height="12" rx="3" fill="#f00" stroke="none" /><path d="M6.500 5.500l4 2.500-4 2.500z" fill="#fff" stroke="none" /></Glyph> },
  { t: "Data control with AWS", i: <Glyph w={16}><rect width="16" height="16" rx="2" fill="#74aa9c" stroke="none" /><circle cx="8" cy="8" r="5" stroke="#fff" /><path d="M5 5l6 2v4M11 4L5 8v4M8 3v5l4 3" stroke="#fff" /></Glyph> },
  { t: "D16128650_Bruno_Fra", i: <MdPublic size={17} /> },
  { t: "Auto Scaling group de", i: <Ec2Icon /> },
  { t: "Load balancers | EC2 |", i: <Ec2Icon />, noBar: true },
  { t: "Instances | EC2 | us-ea", i: <Ec2Icon />, on: true },
  { t: "AWS FIS | us-east-1", i: <Glyph w={16}><path d="M0 0h16v16H0z" fill="#e2286f" stroke="none" /><path d="M3 9q-1-5 4-5.500 6-.5 6 4.500zM8 8v5M6 11h4" stroke="#fff" /></Glyph> },
  { t: "auto-scaling-group-m", i: <MdPublic size={17} /> },
];
const bookmarks: [string, React.ReactNode?][] = [
  ["Runescape"], ["citinzenship"],
  ["Royal Canin - Medi...", <Glyph w={16}><circle cx="8" cy="8" r="8" fill="#0f9ad7" stroke="none" /><path d="M6.500 13V7.500h2a1.800 1.800 0 0 1 0 3.600h-2M5.500 3l1 2.500M9.500 2.500l-1 3" stroke="#fff" strokeWidth="1.500" /></Glyph>],
  ["MasterCard"], ["bike"], ["Masters2023"],
  ["RSA.ie - Customer...", <Glyph w={16}><rect width="16" height="16" rx="1" fill="#e5502e" stroke="none" /><text x="8" y="10" textAnchor="middle" fontSize="6" fontWeight="700" fill="#fff" stroke="none">RSA</text></Glyph>],
  ["NewHome"], ["plusAna"], ["filmes"], ["Diet"],
  ["Home | Codewars", <Glyph w={16}><path d="M8 .5l7 3.800v7.400l-7 3.800-7-3.800V4.300z" fill="#ea4c4c" stroke="none" /><circle cx="8" cy="8" r="4" stroke="#fff" /><path d="M8 4q3 2 0 4t0 4M4 8q2-3 4 0t4 0" stroke="#fff" /></Glyph>],
  ["Mortgage"],
];
const sections: [string, string[]][] = [
  ["Instances", ["Instances", "Instance Types", "Launch Templates", "Spot Requests", "Savings Plans", "Reserved Instances", "Dedicated Hosts", "Capacity Reservations"]],
  ["Images", ["AMIs", "AMI Catalog"]],
  ["Elastic Block Store", ["Volumes", "Snapshots", "Lifecycle Manager"]],
  ["Network & Security", ["Security Groups", "Elastic IPs", "Placement Groups", "Key Pairs", "Network Interfaces"]],
];
const columns: { n: string; w: number; f?: boolean; up?: boolean; pen?: boolean }[] = [
  { n: "Name", w: 140, f: true, pen: true }, { n: "Instance ID", w: 200 }, { n: "Instance state", w: 160, up: true },
  { n: "Instance type", w: 150, f: true }, { n: "Status check", w: 150 }, { n: "Alarm status", w: 130 },
  { n: "Availability Zone", w: 170, f: true }, { n: "Public IPv4 DNS", w: 200, f: true }, { n: "Public IPv4 ...", w: 150, f: true }, { n: "Elastic IP", w: 150 },
];
type Inst = { id: string; s: "run" | "stop" | "end"; az?: string; dns?: string; ip?: string };
const instances: Inst[] = [
  { id: "i-054fafa55fe9dd1ac", s: "run", az: "us-east-1b", dns: "ec2-34-227-97-122.co...", ip: "34.227.97.122" },
  { id: "i-0d8f64989b23a1abe", s: "run", az: "us-east-1a", dns: "ec2-34-229-16-185.co...", ip: "34.229.16.185" },
  { id: "i-0e1a5323e59584605", s: "stop", az: "us-east-1b", dns: "ec2-52-91-112-245.co...", ip: "52.91.112.245" },
  { id: "i-034417157859c156e", s: "end", az: "us-east-1a" },
  { id: "i-06a99ca30b80a7196", s: "end" },
  { id: "i-0238fff12e1c70e4a", s: "end" },
  { id: "i-02bfaafc43c48c653", s: "end" },
  { id: "i-05ddb563f2360f130", s: "end" },
  { id: "i-0c96583c71220afe5", s: "end" },
  { id: "i-09fcf095d9ee191aa", s: "end" },
  { id: "i-0a9ea1aa1f4f9d36d", s: "end" },
  { id: "i-01666df964385bdf2", s: "end" },
];
const States = {
  run: <Inline $tone="#1d8102" $gap={6}><OkGlyph /><span>Running</span><ZoomPair /></Inline>,
  stop: <Inline $tone="#687078" $gap={6}><WaitGlyph /><span>Shutting-d...</span><ZoomPair /></Inline>,
  end: <Inline $tone="#687078"><EndGlyph /><span>Terminated</span><ZoomPair /></Inline>,
};

/* ---------- Clock ---------- */

const ClockWindow = styled.section`
  position: absolute;
  left: 968px;
  top: 383px;
  display: grid;
  grid-template-columns: 49px 1fr;
  width: 728px;
  height: 508px;
  overflow: hidden;
  border: 1px solid #a9a9a9;
  border-radius: 8px;
  background: #f9f9f9;
  color: #1b1b1b;
  font-size: 12px;
  box-shadow: 0 24px 44px rgba(0, 0, 0, 0.3), 0 0 16px rgba(0, 0, 0, 0.12);
`;
const ClockRail = styled.nav`
  display: flex;
  flex-direction: column;
  align-items: center;
  gap: 4px;
  padding-bottom: 5px;
  background: #f3f3f3;
  border-right: 1px solid #e5e5e5;
`;
const RailBtn = styled.button<{ $on?: boolean }>`
  display: flex;
  align-items: center;
  justify-content: center;
  flex: none;
  width: 40px;
  height: 36px;
  padding: 0;
  border: 0;
  border-radius: 4px;
  background: ${(p) => (p.$on ? "linear-gradient(#0067c0, #0067c0) left center / 3px 16px no-repeat #eaeaea" : "none")};
  &:first-child { height: 34px; }
`;
const Initials = styled.span`
  display: flex;
  align-items: center;
  justify-content: center;
  width: 24px;
  height: 24px;
  border-radius: 50%;
  background: #d9d9d9;
  font-size: 9px;
  font-weight: 600;
`;
const ClockMain = styled.div`
  display: flex;
  flex-direction: column;
  align-items: center;
`;
const ClockTitle = styled.header`
  display: flex;
  align-items: center;
  align-self: stretch;
  height: 38px;
  padding-left: 7px;
  gap: 14px;
`;
const ClockTitleButtons = styled.div`
  display: flex;
  height: 34px;
  align-self: flex-start;
  color: #8d8d8d;
`;
const ClockTools = styled.div`
  display: flex;
  align-self: flex-end;
  gap: 26px;
  margin: 67px 90px 0 0;
  height: 19px;
`;
const Digits = styled.div`
  display: flex;
  font-size: 104px;
  line-height: 90px;
`;
const Unit = styled.div`
  text-align: center;
  small { display: block; margin-top: 12px; font-size: 20px; line-height: 26px; }
`;
const Hundredths = styled.span`
  align-self: flex-start;
  font-size: 76px;
  line-height: 109px;
  height: 90px;
`;
const ClockButtons = styled.div`
  display: flex;
  gap: 25px;
  margin-top: 41px;
`;
const Round = styled.button<{ $main?: boolean }>`
  display: flex;
  align-items: center;
  justify-content: center;
  width: 68px;
  height: 68px;
  padding: 0;
  border: ${(p) => (p.$main ? "0" : "1px solid #e6e6e6")};
  border-bottom-color: #cfcfcf;
  border-radius: 50%;
  background: ${(p) => (p.$main ? "#0067c0" : "#fdfdfd")};
  color: ${(p) => (p.$main ? "#fff" : "#1b1b1b")};
`;

const rail = [
  { n: "Focus sessions", g: <><circle cx="8" cy="8" r="7" strokeDasharray="3 1" /><circle cx="8" cy="8" r="4.500" /><path d="M8 3.500a4.500 4.500 0 0 1 0 9z" fill="currentColor" /></> },
  { n: "Timer", g: <path d="M3 1h10M3 15h10M4 1v2.500Q4 6 8 8q4-2 4-4.500V1M4 15v-2.500Q4 10 8 8q4 2 4 4.500V15" /> },
  { n: "Alarm", g: <path d="M8 1a4.500 4.500 0 0 1 4.500 4.500V9l1.200 3H2.300l1.200-3V5.500A4.500 4.500 0 0 1 8 1zM6.500 12.500q0 2 1.500 2t1.500-2" /> },
  { n: "Stopwatch", on: true, g: <><circle cx="8" cy="9" r="6" /><path d="M8 5.500V9M6 .8h4M12.500 3l1.200 1.200" /></> },
  { n: "World clock", g: <><circle cx="8" cy="8" r="6.800" /><path d="M3 12.500l3.500-4.500 1-4 2 2-.5 3 3 1.500-.5 3M6 1.500l1.500 2.500" /></> },
];

const Clock = () => (
  <ClockWindow>
    <ClockRail>
      <RailBtn aria-label="Menu"><Glyph w={16}><path d="M2.500 4h11M2.500 8.500h11M2.500 13h11" /></Glyph></RailBtn>
      {rail.map((r) => <RailBtn key={r.n} $on={r.on} aria-label={r.n}><Glyph w={16}>{r.g}</Glyph></RailBtn>)}
      <Spacer />
      <RailBtn aria-label="Account"><Initials>BF</Initials></RailBtn>
      <RailBtn aria-label="Settings"><Glyph w={16} box="0 0 24 26" line={1.600}><path d={gear} /><circle cx="12" cy="13" r="3.500" /></Glyph></RailBtn>
    </ClockRail>
    <ClockMain>
      <ClockTitle>
        <Glyph w={16}><rect x="1" y="1" width="14" height="14" rx="3" fill="#8b98a3" stroke="#66727c" /><circle cx="8" cy="7.500" r="5" fill="#f7f9fb" stroke="none" /><path d="M8 8L5.500 4.500M8 8l2.500-3" stroke="#333" /><path d="M8 8v4" stroke="#d8572f" /></Glyph>
        <span>Clock</span>
        <Spacer />
        <ClockTitleButtons>
          <Bare $w={46} $h={34} aria-label="Minimize"><MinGlyph /></Bare>
          <Bare $w={46} $h={34} aria-label="Maximize"><MaxGlyph /></Bare>
          <Bare $w={46} $h={34} aria-label="Close"><CloseGlyph /></Bare>
        </ClockTitleButtons>
      </ClockTitle>
      <ClockTools>
        <Bare aria-label="Expand"><Glyph w={15}><path d="M9.500 1.500h5v5M14.500 1.500l-13 13M1.500 9.500v5h5" /></Glyph></Bare>
        <Bare aria-label="Keep on top"><Glyph w={15}><path d="M1 8V3a2 2 0 0 1 2-2h10a2 2 0 0 1 2 2v10a2 2 0 0 1-2 2h-3M8 1v5a2 2 0 0 0 2 2h5M1 15l6-5M3 10h4v4" /></Glyph></Bare>
      </ClockTools>
      <Digits role="timer">
        <Unit>00<small>hr</small></Unit>:
        <Unit>03<small>min</small></Unit>:
        <Unit>47<small>sec</small></Unit>
        <Hundredths>.20</Hundredths>
      </Digits>
      <ClockButtons>
        <Round $main aria-label="Pause"><Glyph w={24} box="0 0 24 24"><rect x="1" y="1" width="8" height="22" rx="2" fill="#fff" stroke="none" /><rect x="15" y="1" width="8" height="22" rx="2" fill="#fff" stroke="none" /></Glyph></Round>
        <Round aria-label="Lap"><Glyph w={24} box="0 0 24 24"><path d="M2 17V1h19l-4 7.500 4 7.500H2" fill="currentColor" stroke="none" /><path d="M2.500 1.500v22" strokeWidth="1.500" /></Glyph></Round>
        <Round aria-label="Reset"><Glyph w={26} box="0 0 26 26" line={1.700}><path d="M7 2L2.500 6.500 7 11M2.500 6.500H14a8.500 8.500 0 1 1-8.500 9" /></Glyph></Round>
      </ClockButtons>
    </ClockMain>
  </ClockWindow>
);

const Chrome = () => (
  <Browser>
    <TabStrip>
      <Tabs>
        {tabs.map((t) => (
          <Tab key={t.t} $on={t.on} $bar={!t.on && !t.noBar}>
            {t.i}<TabText>{t.t}</TabText>
            <Bare aria-label="Close tab"><CloseGlyph w={9} line={2} /></Bare>
          </Tab>
        ))}
      </Tabs>
      <Bare $w={44} aria-label="New tab"><Glyph w={12} box="0 0 12 12" line={2}><path d="M6 1v10M1 6h10" /></Glyph></Bare>
      <Spacer />
      <WindowButtons>
        <Bare $w={46} aria-label="Search tabs"><Glyph w={11} h={8} box="0 0 11 8"><path d="M.5 1l5 5.500 5-5.500" /></Glyph></Bare>
        <Bare $w={46} aria-label="Minimize"><MinGlyph /></Bare>
        <Bare $w={46} aria-label="Restore"><RestoreGlyph /></Bare>
        <Bare $w={46} aria-label="Close"><CloseGlyph /></Bare>
      </WindowButtons>
    </TabStrip>
    <AddressRow>
      <Bare $w={32} aria-label="Back"><MdArrowBack size={18} /></Bare>
      <Bare $w={32} aria-label="Forward"><MdArrowForward size={18} color="#babcbe" /></Bare>
      <Bare $w={32} aria-label="Reload"><MdRefresh size={20} /></Bare>
      <Bare $w={32} aria-label="Home"><MdOutlineHome size={21} /></Bare>
      <Omnibox>
        <MdLock size={15} />
        <Url><b>us-east-1.console.aws.amazon.com</b>/ec2/home?region=us-east-1#Instances:v=3;$case=tags:true%5C,client:false;$regex=tags:false%5C,client:false;sort=instanceState</Url>
        <Bare $w={24} aria-label="Share"><Glyph w={16} line={1.500}><path d="M3 5H1v10h12v-2M9.500 2l5.500 4-5.500 4V7.500q-4 0-5.500 4 0-7 5.500-7z" /></Glyph></Bare>
        <Bare $w={18} aria-label="Bookmark"><MdStarBorder size={19} /></Bare>
      </Omnibox>
      <Bare $w={32} aria-label="Sync"><Glyph w={16} line={2}><path d="M5 2.500A6.500 6.500 0 0 0 5 13.500M11 13.500a6.500 6.500 0 0 0 0-11M2.500 13.500H5.500v-3M13.500 2.500h-3v3" /><circle cx="8" cy="8" r="1.800" /></Glyph></Bare>
      <Bare $w={32} aria-label="Recorder"><Glyph w={16}><rect x="0" y="1" width="15" height="13" rx="2" fill="#5f6368" stroke="none" /><circle cx="5" cy="7" r="2.500" stroke="#fff" /><path d="M9 4v5M12 4v4" stroke="#fff" /><path d="M9 9h7v6H9z" fill="#eee" stroke="none" /></Glyph></Bare>
      <Bare $w={32} aria-label="Extensions"><MdExtension size={18} /></Bare>
      <Bare $w={32} aria-label="Side panel"><Glyph w={15} line={2.500} box="0 0 15 15"><path d="M1.500 1.500h12v12h-12z" strokeLinejoin="miter" /><path d="M9 1.500h4.500v12H9z" fill="currentColor" stroke="none" /></Glyph></Bare>
      <Bare $w={32} aria-label="Profile"><Avatar /></Bare>
      <Update>Update<Glyph w={4} h={14} box="0 0 4 14" line={3}><path d="M2 2v.1M2 7v.1M2 12v.1" /></Glyph></Update>
    </AddressRow>
    <Bookmarks>
      {bookmarks.map(([t, icon]) => <Bookmark key={t} href="#">{icon ?? <Folder />}{t}</Bookmark>)}
    </Bookmarks>
    <AwsNav>
      <Bare $w={31} aria-label="AWS home">
        <Glyph w={31} h={22} box="0 0 31 22">
          <text x="15.500" y="11" textAnchor="middle" fontSize="15" fontWeight="600" fill="#fff" stroke="none">aws</text>
          <path d="M1 15q13 9 27 1.500" stroke="#ff9900" strokeWidth="2.200" /><path d="M25 14.500q5-1 5 0t-1.800 4.500" stroke="#ff9900" strokeWidth="1.500" />
        </Glyph>
      </Bare>
      <NavSep $l={17} $r={17} />
      <NavBtn>
        <Glyph w={16}><path d="M0 0h4v4H0zM6 0h4v4H6zM12 0h4v4h-4zM0 6h4v4H0zM6 6h4v4H6zM12 6h4v4h-4zM0 12h4v4H0zM6 12h4v4H6zM12 12h4v4h-4z" fill="#fff" stroke="none" /></Glyph>Services
      </NavBtn>
      <NavSearch><MdSearch size={20} /><input type="text" placeholder="Search" aria-label="Search" /><span>[Alt+S]</span></NavSearch>
      <Spacer />
      <Bare $w={48} aria-label="CloudShell"><ShellGlyph /></Bare><NavSep />
      <Bare $w={50} aria-label="Notifications"><Glyph w={17} box="0 0 17 17" line={2}><path d="M8.500 1.500Q10 5 12 7.500L15.500 12h-14L5 7.500Q7 5 8.500 1.500zM6.500 12.500q0 3 2 3t2-3" /></Glyph></Bare><NavSep />
      <Bare $w={48} aria-label="Support"><Glyph w={17} box="0 0 17 17" line={1.900}><circle cx="8.500" cy="8.500" r="7.300" /><path d="M6.300 6.500a2.200 2.200 0 1 1 3.200 2q-1 .5-1 1.500M8.500 12.400v.1" /></Glyph></Bare><NavSep />
      <Bare $w={50} aria-label="Settings"><Gear /></Bare><NavSep $r={17} />
      <NavBtn>N. Virginia<TriDown w={8} /></NavBtn><NavSep $l={18} $r={17} />
      <NavBtn>Bruno Rodrigues Franco<TriDown w={8} /></NavBtn>
    </AwsNav>
    <Console>
      <Side>
        <SideTop><SideLink href="#">EC2 Dashboard</SideLink><Bare aria-label="Close navigation"><CloseGlyph w={13} line={1.600} /></Bare></SideTop>
        <SideLink href="#">EC2 Global View</SideLink>
        <SideLink href="#">Events</SideLink>
        {sections.map(([head, links]) => (
          <div key={head}>
            <SideHead><TriDown />{head}</SideHead>
            {links.map((l) => <SideLink key={l} href="#" $on={l === "Instances"}>{l}</SideLink>)}
            {head === "Instances" && <NewTag>New</NewTag>}
          </div>
        ))}
      </Side>
      <VScroll>
        <Bare $h={17} aria-label="Scroll up"><TriUp w={7} /></Bare>
        <VThumb $share={78} />
        <Bare $h={17} aria-label="Scroll down"><TriDown w={7} /></Bare>
      </VScroll>
      <Main>
        <Bar>
          <BarRow>
            <H1>Instances <span>(16)</span></H1>
            <InfoLink href="#">Info</InfoLink>
            <Spacer />
            <AwsBtn $w={50} aria-label="Refresh"><Glyph w={17} box="0 0 17 17" line={2}><path d="M15 8.500a6.500 6.500 0 1 1-2.500-5.200M15 1v4.500h-4.500" strokeLinecap="butt" /></Glyph></AwsBtn>
            <AwsBtn $w={98} $tone="off">Connect</AwsBtn>
            <AwsBtn $w={156}>Instance state<TriDown /></AwsBtn>
            <AwsBtn $w={113}>Actions<TriDown /></AwsBtn>
            <SplitBtn>
              <AwsBtn $w={154} $tone="main">Launch instances</AwsBtn>
              <AwsBtn $w={30} $tone="main" aria-label="More launch options"><TriDown /></AwsBtn>
            </SplitBtn>
          </BarRow>
          <BarRow>
            <FindBox><Mag /><input type="text" placeholder="Find Instance by attribute or tag (case-sensitive)" aria-label="Find instance" /></FindBox>
            <Spacer />
            <Pager>
              <Bare $w={28} aria-label="Previous page"><Glyph w={9} h={15} box="0 0 9 15" line={2}><path d="M8 1L2 7.500 8 14" stroke="#aab7b8" /></Glyph></Bare>
              <PageNumber $w={26}>1</PageNumber>
              <Bare $w={28} aria-label="Next page"><Glyph w={9} h={15} box="0 0 9 15" line={2}><path d="M1 1l6 6.500L1 14" stroke="#aab7b8" /></Glyph></Bare>
              <PaleSep $r={8} />
              <GearBtn $w={26} aria-label="Preferences"><Gear /></GearBtn>
            </Pager>
          </BarRow>
        </Bar>
        <Grid>
          <colgroup>
            <col style={{ width: 53 }} />
            {columns.map((c) => <col key={c.n} style={{ width: c.w }} />)}
            <col />
          </colgroup>
          <thead>
            <tr>
              <th><Box type="checkbox" aria-label="Select all" /></th>
              {columns.map((c) => (
                <th key={c.n}>
                  <HeadCell $on={c.up}>
                    {c.n}
                    {c.pen && <Glyph w={15} line={1.700}><path d="M3 11l8-9 2.500 2.200-8 9L2.500 14zM8 15h6" /></Glyph>}
                    <Spacer />
                    {c.f && <Filter />}
                    {c.up && <TriUp />}
                  </HeadCell>
                </th>
              ))}
              <th />
            </tr>
          </thead>
          <tbody>
            {instances.map((r) => (
              <tr key={r.id}>
                <td><Box type="checkbox" aria-label={`Select ${r.id}`} /></td>
                <td />
                <td><IdLink href="#">{r.id}</IdLink></td>
                <td>{States[r.s]}</td>
                <td>t2.micro</td>
                <td>{r.s === "run" ? <Inline $tone="#1d8102" $small><OkGlyph /><span>2/2 checks passed</span></Inline> : "–"}</td>
                <td>{r.az && <Inline $gap={10}><span>No alarms</span><Glyph w={14} box="0 0 14 14" line={1.800}><path d="M7 0v14M0 7h14" stroke="#545b64" /></Glyph></Inline>}</td>
                <td>{r.az}</td>
                <td>{r.dns}</td>
                <td>{r.ip}</td>
                <td>–</td>
                <td />
              </tr>
            ))}
          </tbody>
        </Grid>
        <HScroll>
          <Glyph w={5} h={8} box="0 0 5 8"><path d="M5 0v8L0 4z" fill="#a3a3a3" stroke="none" /></Glyph>
          <HThumb />
          <Spacer />
          <Glyph w={5} h={8} box="0 0 5 8"><path d="M0 0v8l5-4z" fill="currentColor" stroke="none" /></Glyph>
        </HScroll>
        <Detail>
          <H2>Select an instance</H2>
          <DetailTools>
            <GearBtn $w={24} aria-label="Panel preferences"><Gear w={17} /></GearBtn>
            <PaleSep />
            <Bare $w={36} aria-label="Close panel"><CloseGlyph w={13} line={1.600} /></Bare>
          </DetailTools>
        </Detail>
      </Main>
      <VScroll>
        <Bare $h={17} aria-label="Scroll up"><TriUp w={7} /></Bare>
        <VThumb $share={83} />
        <Bare $h={17} aria-label="Scroll down"><TriDown w={7} /></Bare>
      </VScroll>
    </Console>
    <AwsFooter>
      <Shell href="#"><ShellGlyph />CloudShell</Shell>
      <a href="#">Feedback</a>
      <Spacer />
      <span>© 2023, Amazon Web Services, Inc. or its affiliates.</span>
      <a href="#">Privacy</a>
      <a href="#">Terms</a>
      <a href="#">Cookie preferences</a>
    </AwsFooter>
    <Clock />
  </Browser>
);

export default function App() {
  return (
    <>
      <Global />
      <Desktop>
        <JMeter />
        <Word />
        <Chrome />
      </Desktop>
    </>
  );
}
